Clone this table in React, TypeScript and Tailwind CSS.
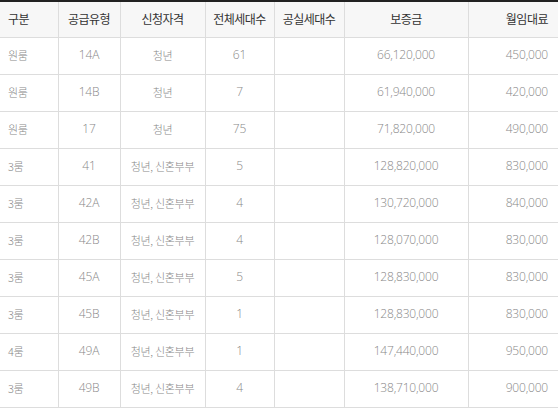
import React from 'react';

const rows = [
  ['원룸', '14A', '청년', '61', '', '66,120,000', '450,000'],
  ['원룸', '14B', '청년', '7', '', '61,940,000', '420,000'],
  ['원룸', '17', '청년', '75', '', '71,820,000', '490,000'],
  ['3룸', '41', '청년, 신혼부부', '5', '', '128,820,000', '830,000'],
  ['3룸', '42A', '청년, 신혼부부', '4', '', '130,720,000', '840,000'],
  ['3룸', '42B', '청년, 신혼부부', '4', '', '128,070,000', '830,000'],
  ['3룸', '45A', '청년, 신혼부부', '5', '', '128,830,000', '830,000'],
  ['3룸', '45B', '청년, 신혼부부', '1', '', '128,830,000', '830,000'],
  ['4룸', '49A', '청년, 신혼부부', '1', '', '147,440,000', '950,000'],
  ['3룸', '49B', '청년, 신혼부부', '4', '', '138,710,000', '900,000'],
];

const heads = ['구분', '공급유형', '신청자격', '전체세대수', '공실세대수', '보증금', '월임대료'];
const widths = ['w-[58px]', 'w-[62px]', 'w-[85px]', 'w-[69px]', 'w-[70px]', 'w-[124px]', 'w-[90px]'];
const aligns = ['text-left pl-[8px]', 'text-center', 'text-center', 'text-center', 'text-center', 'text-center', 'text-right pr-[10px]'];

// numbers use a wider latin face, korean stays on the CJK face
const isLatin = (s: string) => /^[0-9A-Z,]+$/.test(s);

export default function App() {
  return (
    <div className="w-[558px] h-[411px] bg-white overflow-hidden font-['Noto_Sans_CJK_KR',sans-serif]">
      <table className="w-[558px] border-collapse table-fixed border-t-2 border-t-[#222]">
        <colgroup>
          {widths.map((w, i) => (
            <col key={i} className={w} />
          ))}
        </colgroup>
        <thead>
          <tr className="h-[36px] bg-[#f7f7f7]">
            {heads.map((h, i) => (
              <th
                key={i}
                className={`${aligns[i]} text-[12px] font-normal text-[#333] border-b border-[#ddd] ${i > 0 ? 'border-l border-l-[#ddd]' : ''} tracking-[-0.5px]`}
              >
                {h}
              </th>
            ))}
          </tr>
        </thead>
        <tbody>
          {rows.map((r, ri) => (
            <tr key={ri} className="h-[37px]">
              {r.map((c, i) => (
                <td
                  key={i}
                  className={`${aligns[i]} text-[#888] font-light leading-[16px] pb-[2px] border-b border-[#ddd] ${i > 0 ? 'border-l border-l-[#ddd]' : ''} ${
                    isLatin(c)
                      ? "font-['Open_Sans',sans-serif] text-[12px] tracking-[-0.2px]"
                      : 'text-[11px] tracking-[-0.3px]'
                  }`}
                >
                  {c}
                </td>
              ))}
            </tr>
          ))}
        </tbody>
      </table>
    </div>
  );
}
